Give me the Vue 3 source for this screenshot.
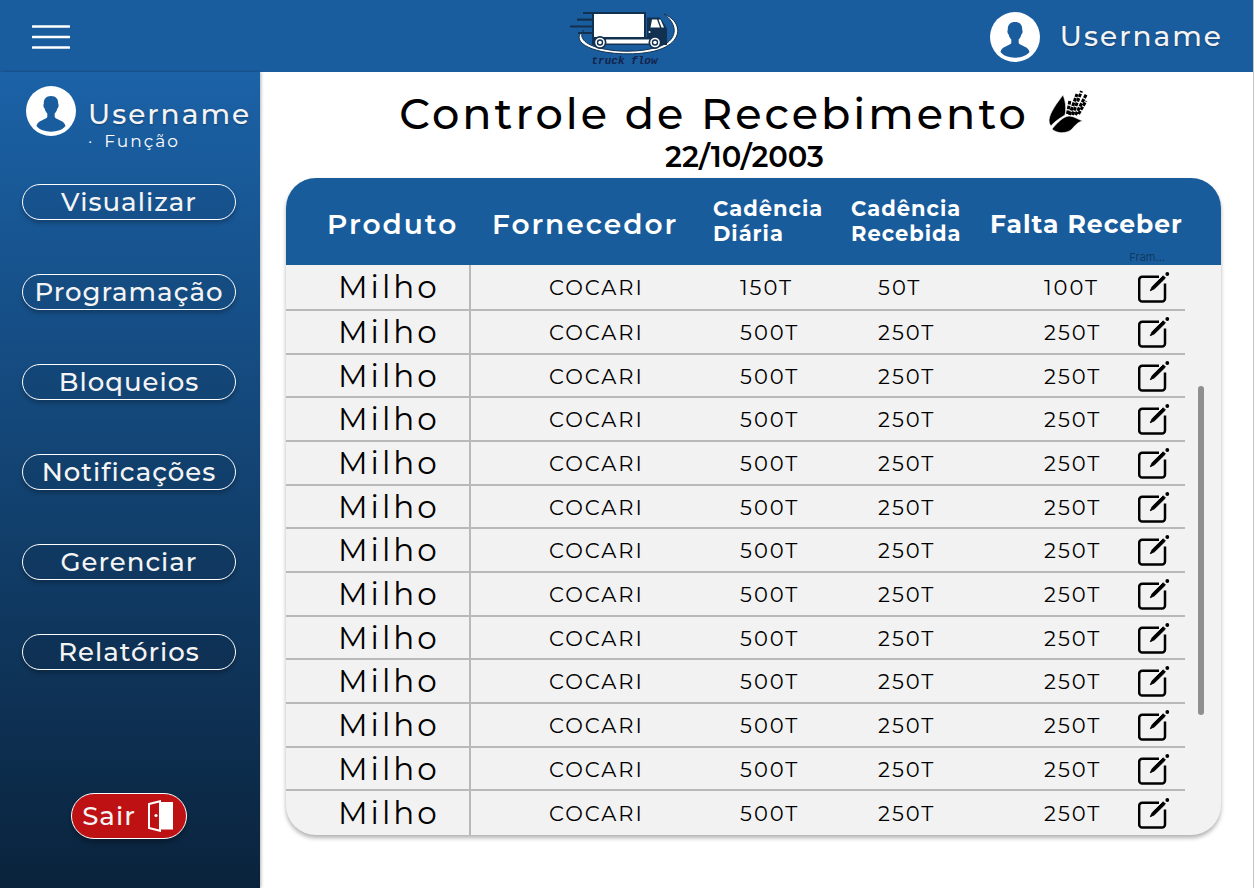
<script setup>
const menu = ['Visualizar', 'Programação', 'Bloqueios', 'Notificações', 'Gerenciar', 'Relatórios']

const rows = [
  { produto: 'Milho', fornecedor: 'COCARI', diaria: '150T', recebida: '50T', falta: '100T' },
  ...Array.from({ length: 12 }, () => ({
    produto: 'Milho', fornecedor: 'COCARI', diaria: '500T', recebida: '250T', falta: '250T'
  }))
]

const kernels = [
  'M18.500 24L21 10', 'M20.500 25L28 4', 'M23.500 25L32.500 1', 'M26.500 25L37.500 4', 'M29.500 24L37 11'
]
</script>

<template>
  <div class="app">
    <header class="topbar">
      <button class="burger" type="button" aria-label="Menu">
        <svg width="38" height="24" viewBox="0 0 38 24">
          <path d="M1 1.500H37M1 12H37M1 22.500H37" stroke="#fff" stroke-width="2.600" stroke-linecap="round" />
        </svg>
      </button>

      <a class="logo" href="#" aria-label="truck flow">
        <svg width="110" height="46" viewBox="0 0 110 46">
          <path d="M14 21C7 29 17 37 34 40C52 44 82 43 97 34C108 26 106 14 94 5C111 12 112 28 98 36.500C84 46 52 46.500 32 42.500C11 38 3 29 14 21Z" fill="#fff" stroke="#12304f" stroke-width="1" />
          <path d="M13 4H24M7 10.700H24M0 17.500H24M8 24H24" stroke="#12304f" stroke-width="2.200" />
          <path d="M22 3H76V28H77V8.500H90L95 16L97 20V36H22Z" fill="#12304f" />
          <rect x="24" y="5" width="50" height="23" fill="#fff" />
          <path d="M36 30.500H80V34.500H36Z" fill="#fff" />
          <path d="M82 10.500H87L90 18.500H80.500ZM88.500 10.500H90.500L94 18.500H91.500Z" fill="#fff" />
          <circle cx="79.500" cy="23" r="1" fill="#fff" />
          <g v-for="cx in [30, 85]" :key="cx">
            <circle :cx="cx" cy="33.500" r="6.500" fill="#12304f" />
            <circle :cx="cx" cy="33.500" r="4.800" fill="#fff" />
            <circle :cx="cx" cy="33.500" r="3.200" fill="#12304f" />
            <circle :cx="cx" cy="33.500" r="1.800" fill="#fff" />
          </g>
        </svg>
        <span class="logo-name">truck flow</span>
      </a>

      <div class="user">
        <svg class="avatar" viewBox="0 0 50 50">
          <circle cx="25" cy="25" r="25" fill="#fff" />
          <path d="M25 10C20 10 17.500 13 17.800 18C17 18.500 17.500 22 18.700 22.500C19 25 20.500 26.500 21.300 27.500V31C20 34 11.500 34 10.500 40C16 47.500 34 47.500 39.500 40C38.500 34 30 34 28.700 31V27.500C29.500 26.500 31 25 31.300 22.500C32.500 22 33 18.500 32.200 18C32.500 13 30 10 25 10Z" fill="#1a5d9f" />
        </svg>
        <span class="username">Username</span>
      </div>
    </header>

    <aside class="sidebar">
      <div class="profile">
        <svg class="avatar" viewBox="0 0 50 50">
          <circle cx="25" cy="25" r="25" fill="#fff" />
          <path d="M25 10C20 10 17.500 13 17.800 18C17 18.500 17.500 22 18.700 22.500C19 25 20.500 26.500 21.300 27.500V31C20 34 11.500 34 10.500 40C16 47.500 34 47.500 39.500 40C38.500 34 30 34 28.700 31V27.500C29.500 26.500 31 25 31.300 22.500C32.500 22 33 18.500 32.200 18C32.500 13 30 10 25 10Z" fill="#1a5d9f" />
        </svg>
        <div class="who">
          <span class="username">Username</span>
          <span class="role"><span>·</span><span>Função</span></span>
        </div>
      </div>

      <nav class="menu">
        <button v-for="item in menu" :key="item" class="menu-item" type="button">{{ item }}</button>
      </nav>

      <button class="exit" type="button">
        <span>Sair</span>
        <svg width="25" height="32" viewBox="0 0 25 32">
          <path d="M12 2H25V29.500H12Z" fill="#fff" />
          <path d="M1 4L12 1.200V30.800L1 28Z" fill="#bd1114" stroke="#fff" stroke-width="2" />
          <circle cx="8" cy="15.500" r="1.600" fill="#fff" />
        </svg>
      </button>
    </aside>

    <main class="content">
      <div class="heading">
        <h1>Controle de Recebimento</h1>
        <svg class="corn" width="39" height="43" viewBox="0 0 39 43">
          <path v-for="k in kernels" :key="k" :d="k" fill="none" stroke="#000" stroke-width="3" stroke-dasharray="3.600 1.200" />
          <path d="M14 5C8 13 1 22 0 30C0 33 1 35 2 36C5 32 11 28 16 25C17.500 18 16.500 11 14 5Z" stroke="#fff" stroke-width=".6" />
          <path d="M3 39C8 33 14 26.500 20 26C25 26 30 30 34 31C28 32 26 36 22 40C17 43.500 8 44 3 39Z" stroke="#fff" stroke-width=".6" />
        </svg>
      </div>
      <p class="date">22/10/2003</p>

      <div class="card">
        <table>
          <colgroup>
            <col class="c-produto"><col class="c-fornecedor"><col class="c-cadencia"><col class="c-cadencia">
            <col class="c-falta"><col class="c-acao"><col class="c-margem">
          </colgroup>
          <thead>
            <tr>
              <th class="produto" scope="col">Produto</th>
              <th class="fornecedor" scope="col">Fornecedor</th>
              <th class="cadencia" scope="col">Cadência Diária</th>
              <th class="cadencia" scope="col">Cadência Recebida</th>
              <th class="falta" scope="col" colspan="3">Falta Receber<span class="frame-label">Fram...</span></th>
            </tr>
          </thead>
          <tbody>
            <tr v-for="(row, i) in rows" :key="i">
              <td class="produto">{{ row.produto }}</td>
              <td class="fornecedor">{{ row.fornecedor }}</td>
              <td class="cadencia">{{ row.diaria }}</td>
              <td class="cadencia">{{ row.recebida }}</td>
              <td class="falta">{{ row.falta }}</td>
              <td class="acao">
                <button class="edit" type="button" aria-label="Editar">
                  <svg width="32" height="32" viewBox="0 0 32 32">
                    <path d="M21 4.800H4.200A3 3 0 0 0 1.200 7.800V26.500A3 3 0 0 0 4.200 29.500H24A3 3 0 0 0 27 26.500V11.500" fill="none" stroke="#000" stroke-width="2.500" />
                    <path d="M12.300 18.700L14.300 14.500L25.200 3.800L27.400 6L16.500 16.700Z" stroke="#000" stroke-width="1" stroke-linejoin="round" />
                    <circle cx="29.300" cy="2" r="1.900" />
                  </svg>
                </button>
              </td>
              <td v-if="i === 0" class="margem" :rowspan="rows.length"></td>
            </tr>
          </tbody>
        </table>
        <span class="scroll-thumb" aria-hidden="true"></span>
      </div>
    </main>
  </div>
</template>

<style>
body {
  margin: 0;
}
</style>

<style scoped>
.app {
  display: grid;
  grid-template-columns: 260px 1fr;
  grid-template-rows: 72px 1fr;
  min-height: 100vh;
  box-sizing: border-box;
  border-right: 1px solid #c4c4c4;
  background: #fff;
  color: #000;
  font-family: Montserrat, Inter, "Liberation Sans", sans-serif;
}

button {
  font: inherit;
  color: inherit;
  background: none;
  border: 0;
  padding: 0;
  cursor: pointer;
}

svg {
  display: block;
  flex: none;
}

.topbar {
  grid-column: 1 / -1;
  display: grid;
  grid-template-columns: 1fr auto 1fr;
  align-items: center;
  padding: 2px 30px 0 32px;
  background: #1a5d9f;
  color: #fff;
}

.burger {
  justify-self: start;
}

.logo {
  display: flex;
  flex-direction: column;
  align-items: center;
  padding: 2px 6px 0 0;
  color: #14224a;
  text-decoration: none;
}

.logo-name {
  font: italic 700 11px/12px "Liberation Mono", monospace;
}

.user {
  display: flex;
  justify-self: end;
  align-items: center;
  gap: 20px;
}

.avatar {
  width: 50px;
  height: 50px;
}

.username {
  color: #f4f4f4;
  font-size: 28px;
  line-height: 32px;
  font-weight: 500;
  letter-spacing: 2px;
  text-shadow: 0 1px 2px rgba(0, 0, 0, .3);
}

.user .username {
  padding-bottom: 2px;
}

.sidebar {
  display: flex;
  flex-direction: column;
  padding: 14px 24px 49px 22px;
  background: linear-gradient(#1b62a7, #0a233c);
  box-shadow: 1px 0 3px rgba(0, 0, 0, .3);
  color: #fff;
}

.profile {
  display: flex;
  gap: 12px;
  padding-left: 4px;
  margin-right: -24px;
}

.who {
  display: flex;
  flex-direction: column;
  padding-top: 12px;
}

.role {
  display: flex;
  gap: 10px;
  font-size: 17px;
  line-height: 22px;
  letter-spacing: 2px;
}

.menu {
  display: flex;
  flex-direction: column;
  gap: 54px;
  margin-top: 32px;
}

.menu-item {
  height: 36px;
  border: 1px solid #fff;
  border-radius: 18px;
  background: rgba(0, 0, 0, .06);
  box-shadow: 0 3px 4px rgba(0, 0, 0, .25);
  color: #f4f4f4;
  font-size: 26px;
  line-height: 32px;
  font-weight: 500;
  letter-spacing: 1px;
}

.exit {
  display: flex;
  align-items: center;
  align-self: center;
  gap: 12px;
  height: 46px;
  margin-top: auto;
  padding: 0 13px 0 10px;
  border: 1px solid #fff;
  border-radius: 23px;
  background: #bd1114;
  box-shadow: 0 4px 4px rgba(0, 0, 0, .25);
  color: #f4f4f4;
  font-size: 26px;
  font-weight: 500;
  letter-spacing: 1px;
}

.content {
  padding: 14px 32px 52px 26px;
}

.heading {
  display: flex;
  align-items: center;
  justify-content: center;
  gap: 20px;
  padding-right: 20px;
}

.corn {
  margin-bottom: 6px;
}

h1 {
  margin: 0;
  font-size: 43px;
  line-height: 56px;
  font-weight: 500;
  letter-spacing: 3px;
}

.date {
  margin: 0 0 6px;
  padding-right: 18px;
  font-size: 29px;
  line-height: 30px;
  font-weight: 600;
  text-align: center;
}

.card {
  position: relative;
  overflow: hidden;
  border-radius: 30px;
  background: #f2f2f2;
  box-shadow: 0 3px 4px rgba(0, 0, 0, .3);
}

table {
  width: 100%;
  table-layout: fixed;
  border-collapse: separate;
  border-spacing: 0;
}

.c-produto { width: 185px; }
.c-cadencia { width: 138px; }
.c-falta { width: 152px; }
.c-acao { width: 57px; }
.c-margem { width: 36px; }

th, td {
  box-sizing: border-box;
  padding: 0;
  text-align: left;
  vertical-align: middle;
}

th {
  position: relative;
  height: 87px;
  padding-top: 4px;
  background: #195c9b;
  color: #fff;
  font-weight: 600;
  font-size: 28px;
  line-height: 32px;
  letter-spacing: 2px;
}

th.produto { padding-left: 41px; }
th.fornecedor { padding-left: 21px; }

th.cadencia {
  padding: 0 0 2px 13px;
  font-size: 21px;
  line-height: 25px;
  font-weight: 700;
  letter-spacing: 1px;
}

th.falta {
  padding-left: 14px;
  font-size: 25px;
  font-weight: 700;
  letter-spacing: 1px;
}

.frame-label {
  position: absolute;
  right: 56px;
  bottom: 1px;
  color: rgba(0, 0, 0, .4);
  font: 400 11px/13px Inter, sans-serif;
  letter-spacing: 0;
}

td {
  height: 44px;
  padding-top: 2px;
  border-bottom: 2px solid #b9b9b9;
  font-size: 21px;
  line-height: 26px;
  letter-spacing: 2px;
}

tr:nth-child(3n) td { height: 43px; }
tr:first-child td { height: 46px; }
tr:last-child td, td.margem { border-bottom: 0; }

td.produto {
  padding-top: 0;
  padding-left: 52px;
  border-right: 2px solid #b9b9b9;
  font-size: 31px;
  letter-spacing: 3px;
}

td.fornecedor { padding-left: 78px; }
td.cadencia { padding-left: 40px; }
td.falta { padding-left: 68px; }

.edit {
  display: block;
  margin-left: 10px;
}

.scroll-thumb {
  position: absolute;
  top: 208px;
  right: 17px;
  width: 6px;
  height: 50%;
  border-radius: 3px;
  background: #8f8f8f;
}
</style>
